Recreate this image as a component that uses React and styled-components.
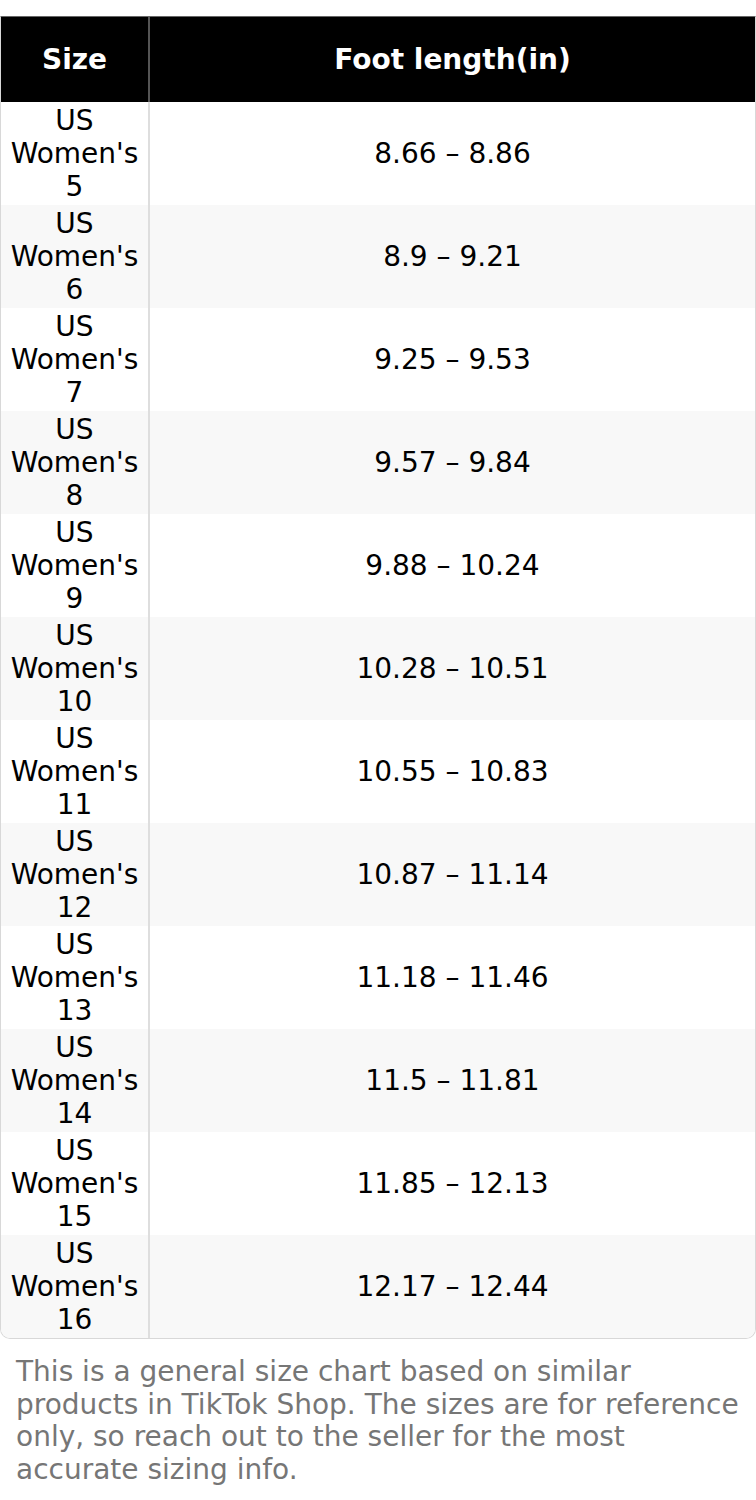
import React from "react";
import styled, { createGlobalStyle } from "styled-components";

const Global = createGlobalStyle`
  html, body { margin: 0; padding: 0; background: #fff; }
  body { font-family: "DejaVu Sans", "Noto Sans", sans-serif; }
`;

const Page = styled.div`
  padding-top: 16px;
  width: 756px;
`;

const Frame = styled.div`
  border: 1px solid #d8d8d8;
  border-top-color: #666;
  border-radius: 0 0 10px 10px;
  overflow: hidden;
`;

const Table = styled.table`
  width: 100%;
  border-collapse: collapse;
  table-layout: fixed;
  font-size: 28px;
  line-height: 33px;
`;

const HeadCell = styled.th`
  background: #000;
  color: #fff;
  font-weight: 700;
  padding: 26px 4px;
  text-align: center;
  border-right: ${(p) => (p.$first ? "2px solid #555" : "none")};
`;

const Row = styled.tr`
  background: ${(p) => (p.$alt ? "#f8f8f8" : "#fff")};
`;

const Cell = styled.td`
  color: #000;
  padding: 2px 4px;
  text-align: center;
  vertical-align: middle;
  border-right: ${(p) => (p.$first ? "2px solid #dedede" : "none")};
`;

const Note = styled.p`
  margin: 17px 0 0;
  padding: 0 16px;
  color: #767676;
  font-size: 28px;
  line-height: 32.5px;
`;

const rows = [
  ["5", "8.66 – 8.86"],
  ["6", "8.9 – 9.21"],
  ["7", "9.25 – 9.53"],
  ["8", "9.57 – 9.84"],
  ["9", "9.88 – 10.24"],
  ["10", "10.28 – 10.51"],
  ["11", "10.55 – 10.83"],
  ["12", "10.87 – 11.14"],
  ["13", "11.18 – 11.46"],
  ["14", "11.5 – 11.81"],
  ["15", "11.85 – 12.13"],
  ["16", "12.17 – 12.44"],
];

export default function App() {
  return (
    <Page>
      <Global />
      <Frame>
        <Table>
          <colgroup>
            <col style={{ width: 148 }} />
            <col />
          </colgroup>
          <thead>
            <tr>
              <HeadCell $first>Size</HeadCell>
              <HeadCell>Foot length(in)</HeadCell>
            </tr>
          </thead>
          <tbody>
            {rows.map(([s, len], i) => (
              <Row key={s} $alt={i % 2 === 1}>
                <Cell $first>
                  US
                  <br />
                  Women's
                  <br />
                  {s}
                </Cell>
                <Cell>{len}</Cell>
              </Row>
            ))}
          </tbody>
        </Table>
      </Frame>
      <Note>
        This is a general size chart based on similar products in TikTok Shop. The sizes are for reference only, so reach out to the seller for the most accurate sizing info.
      </Note>
    </Page>
  );
}
